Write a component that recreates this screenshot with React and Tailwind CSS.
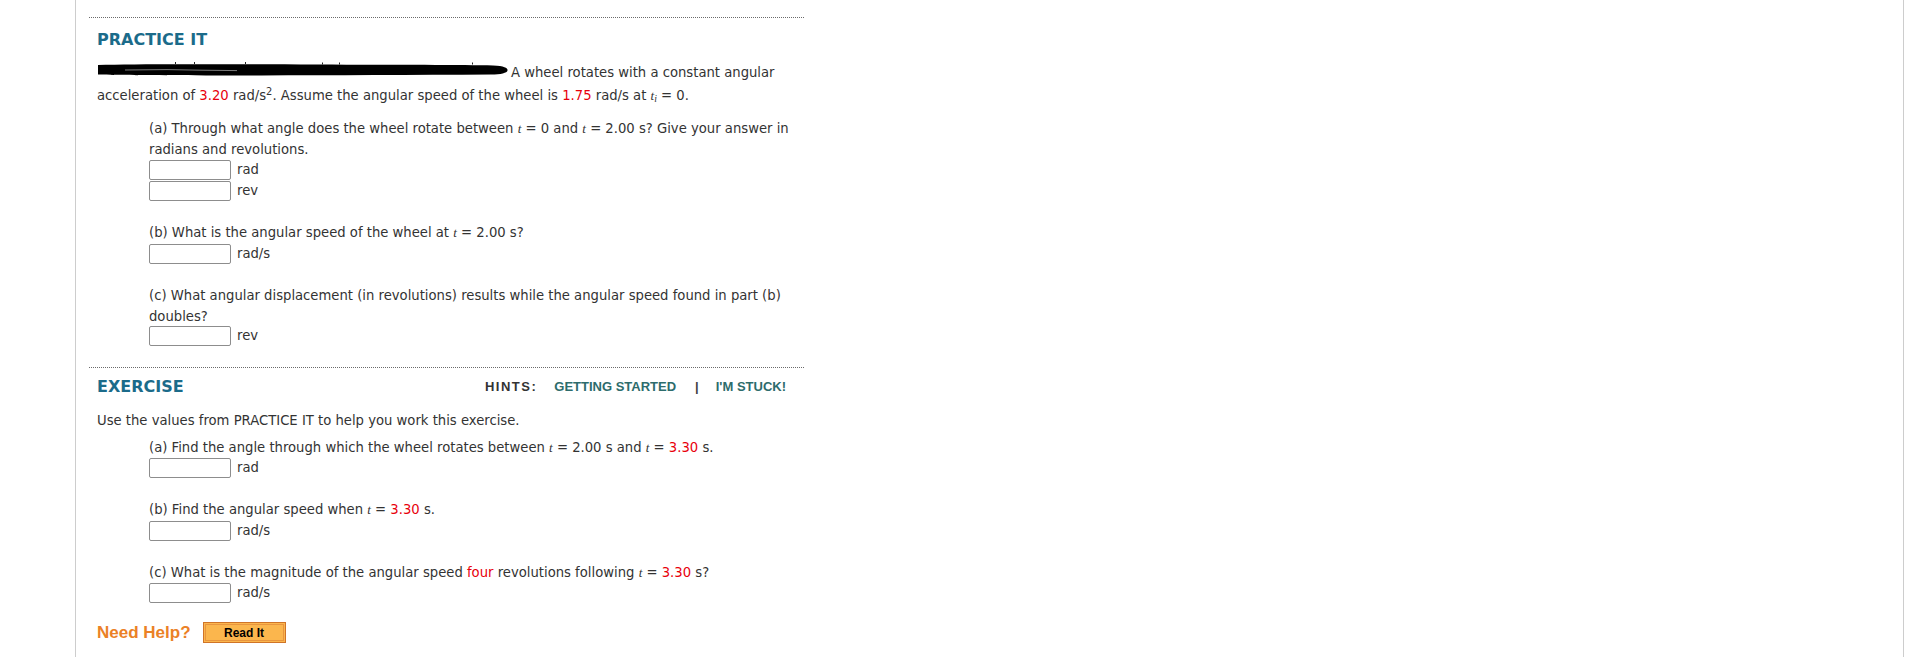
import React from "react";

const Red = ({ children }) => <span className="text-[#e8000b]">{children}</span>;

const T = ({ sub }) => (
  <span className="font-['Liberation_Serif',serif] italic text-[13px]">
    t{sub ? <sub className="font-['Liberation_Serif',serif] italic">i</sub> : null}
  </span>
);

const Box = ({ unit }) => (
  <div className="flex items-center h-[20px]">
    <input
      type="text"
      readOnly
      className="w-[82px] h-[20px] border border-[#8d8d8d] rounded-[2px] bg-white"
    />
    <span className="ml-[6px] leading-[20px]">{unit}</span>
  </div>
);

const Scribble = () => (
  <svg
    width="411"
    height="16"
    viewBox="0 0 411 16"
    className="inline-block align-[-1px] mr-[3px]"
  >
    <path
      d="M1 3 C40 1.8 120 2.2 220 2.6 C300 3 368 2.8 396 3.6 C408 4 411 6.5 410.5 8.5 C410 11 404 12.5 394 12.6 C300 13.2 200 13.6 120 13.4 C60 13.3 20 13.2 1 12.5 Z"
      fill="#000"
    />
    <path d="M28 8 L70 7.6 L105 8.2 L140 8.6" stroke="#9a9a9a" strokeWidth="0.8" fill="none" />
    <rect x="78" y="0" width="1" height="2" fill="#222" />
    <rect x="97" y="0" width="1" height="2" fill="#222" />
    <rect x="148" y="0" width="1" height="2" fill="#222" />
    <rect x="225" y="0.5" width="1" height="2" fill="#222" />
    <rect x="242" y="0.5" width="1" height="2" fill="#222" />
    <rect x="375" y="0.5" width="1" height="2" fill="#222" />
  </svg>
);

export default function App() {
  return (
    <div className="min-h-[657px] bg-white font-['DejaVu_Sans',sans-serif] text-[13.2px] text-[#333]">
      <div className="ml-[75px] w-[1829px] min-h-[657px] border-x border-[#cdcdcd] pt-[17px]">
        <section className="ml-[13px] w-[715px] border-t border-dotted border-[#6a6a6a] px-[8px] pb-[21px]">
          <h2 className="mt-[12px] text-[16px] leading-[20px] font-bold text-[#1b6b8a]">
            PRACTICE IT
          </h2>
          <p className="mt-[11px] leading-[23px]">
            <Scribble />A wheel rotates with a constant angular acceleration of{" "}
            <Red>3.20</Red> rad/s<sup>2</sup>. Assume the angular speed of the wheel is{" "}
            <Red>1.75</Red> rad/s at <T sub /> = 0.
          </p>
          <div className="ml-[52px]">
            <p className="mt-[11px] leading-[21px]">
              (a) Through what angle does the wheel rotate between <T /> = 0 and <T /> = 2.00 s?
              Give your answer in radians and revolutions.
            </p>
            <div className="flex flex-col gap-[1px]">
              <Box unit="rad" />
              <Box unit="rev" />
            </div>
            <p className="mt-[21px] leading-[21px]">
              (b) What is the angular speed of the wheel at <T /> = 2.00 s?
            </p>
            <div className="mt-[1px]">
              <Box unit="rad/s" />
            </div>
            <p className="mt-[21px] leading-[21px]">
              (c) What angular displacement (in revolutions) results while the angular speed found
              in part (b) doubles?
            </p>
            <div className="-mt-[1px]">
              <Box unit="rev" />
            </div>
          </div>
        </section>

        <section className="ml-[13px] w-[715px] border-t border-dotted border-[#6a6a6a] px-[8px]">
          <div className="mt-[9px] flex items-center h-[20px]">
            <h2 className="text-[16px] leading-[20px] font-bold text-[#1b6b8a]">EXERCISE</h2>
            <div className="ml-auto mr-[10px] flex items-center font-['Liberation_Sans',sans-serif] font-bold text-[13px]">
              <span className="text-[#333] tracking-[1.5px]">HINTS:</span>
              <span className="ml-[17px] text-[#2d6c6c]">GETTING STARTED</span>
              <span className="ml-[19px] text-[#444]">|</span>
              <span className="ml-[17px] text-[#2d6c6c]">I'M STUCK!</span>
            </div>
          </div>
          <p className="mt-[13px] leading-[21px]">
            Use the values from PRACTICE IT to help you work this exercise.
          </p>
          <div className="ml-[52px]">
            <p className="mt-[6px] leading-[21px]">
              (a) Find the angle through which the wheel rotates between <T /> = 2.00 s and{" "}
              <T /> = <Red>3.30</Red> s.
            </p>
            <Box unit="rad" />
            <p className="mt-[21px] leading-[21px]">
              (b) Find the angular speed when <T /> = <Red>3.30</Red> s.
            </p>
            <div className="mt-[1px]">
              <Box unit="rad/s" />
            </div>
            <p className="mt-[21px] leading-[21px]">
              (c) What is the magnitude of the angular speed <Red>four</Red> revolutions following{" "}
              <T /> = <Red>3.30</Red> s?
            </p>
            <Box unit="rad/s" />
          </div>
          <div className="mt-[19px] flex items-center h-[21px]">
            <span className="font-['Liberation_Sans',sans-serif] font-bold text-[17px] text-[#eb8126] leading-[21px]">
              Need Help?
            </span>
            <button className="ml-[12px] w-[83px] h-[21px] border border-[#d07428] bg-[#fbb64d] p-[1px]">
              <span className="flex items-center justify-center w-full h-full border border-[#e8953f] font-['Liberation_Sans',sans-serif] font-bold text-[12px] text-black leading-none">
                Read It
              </span>
            </button>
          </div>
        </section>
      </div>
    </div>
  );
}
